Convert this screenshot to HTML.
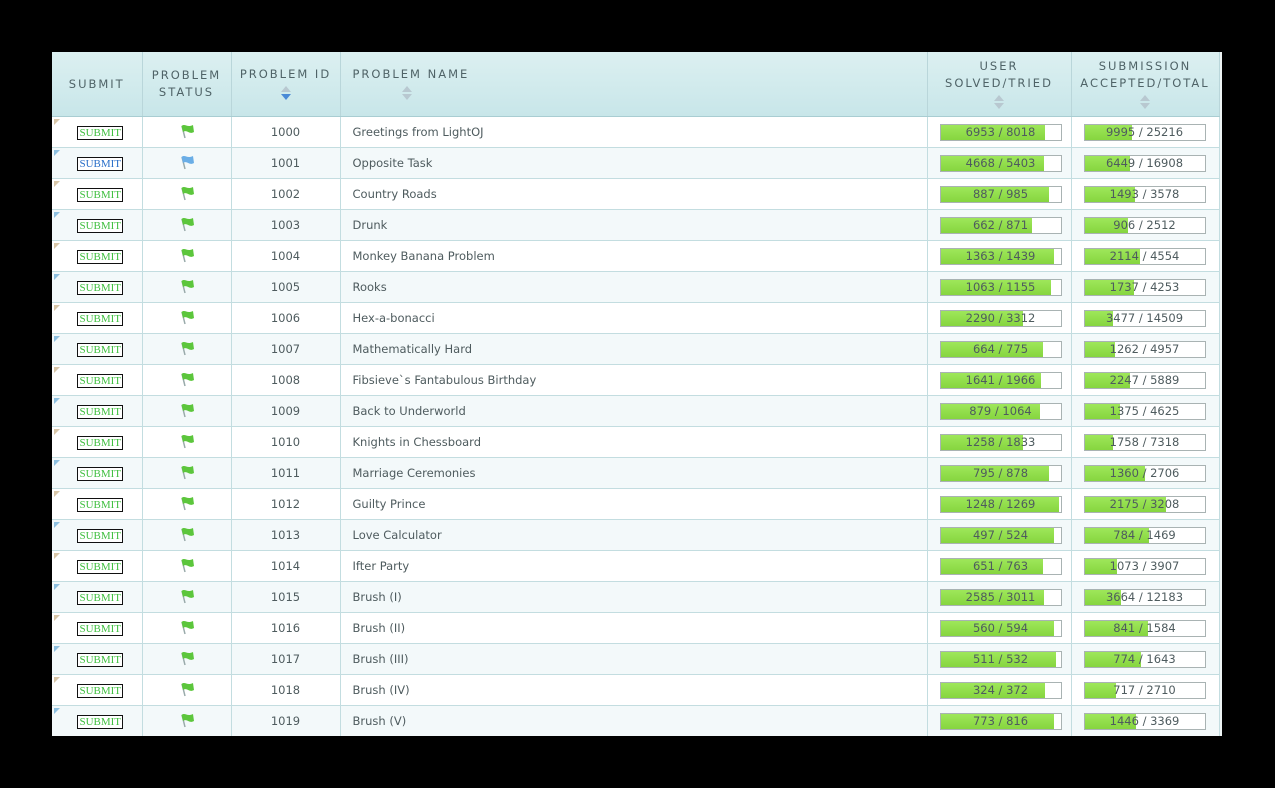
<!DOCTYPE html>
<html><head><meta charset="utf-8"><style>
html,body{margin:0;padding:0;background:#000;width:1275px;height:788px;overflow:hidden}
#wrap{position:absolute;left:52px;top:52px;width:1170px;height:684px;background:#eef4f4;overflow:hidden}
table{border-collapse:collapse;table-layout:fixed;width:1167px;font-family:"DejaVu Sans","Liberation Sans",sans-serif;font-size:11.5px;color:#4e5b5e}
th{height:64px;background:linear-gradient(#dcf0f1,#c8e6e9);font-weight:normal;letter-spacing:2px;font-size:11.5px;color:#4f6367;border-right:1px solid #b9d6da;border-bottom:1px solid #a9cdd2;line-height:17px;vertical-align:middle;padding:0}
td{height:30px;border-right:1px solid #c3dde0;border-bottom:1px solid #c3dde0;padding:0;position:relative}
tr.o td{background:#fff}
tr.e td{background:#f3f9fa}
.c{text-align:center}
.n{padding-left:12px}
.arr{display:block;margin:1px auto 0;width:12px;height:18px}
.btn{display:inline-block;border:1px solid #111;font-family:"Liberation Serif",serif;font-size:11px;color:#3fbf3f;padding:0 1px;line-height:12px;background:#fff;margin-left:7px}
.btn.b{color:#2a6fc9}
.tri{position:absolute;left:2px;top:2px;width:0;height:0;border-top:6px solid #d8c6a8;border-right:6px solid transparent}
.tri.b{border-top-color:#8ec0e0}
.bar{position:relative;margin-left:12px;width:120px;height:15px;border:1px solid #a9b3b3;background:#fff;text-align:center;line-height:15px;font-size:11.5px;color:#4e5b5e}
.bar i{position:absolute;left:0;top:0;bottom:0;background:linear-gradient(#9ee75a,#86d53f)}
.bar span{position:relative}
</style></head><body><div id="wrap">
<table>
<colgroup><col style="width:90px"><col style="width:89px"><col style="width:109px"><col style="width:587px"><col style="width:144px"><col style="width:148px"></colgroup>
<tr><th>SUBMIT</th><th>PROBLEM<br>STATUS</th><th>PROBLEM ID<svg class="arr" viewBox="0 0 12 18"><path d="M6 2L11 8H1z" fill="#b8c8d0"/><path d="M6 16L11 10H1z" fill="#4a8ad6"/></svg></th><th style="text-align:left;padding-left:12px">PROBLEM NAME<svg class="arr" style="margin-left:48px" viewBox="0 0 12 18"><path d="M6 2L11 8H1z" fill="#b8c8d0"/><path d="M6 16L11 10H1z" fill="#b8c8d0"/></svg></th><th>USER<br>SOLVED/TRIED<svg class="arr" viewBox="0 0 12 18"><path d="M6 2L11 8H1z" fill="#b8c8d0"/><path d="M6 16L11 10H1z" fill="#b8c8d0"/></svg></th><th>SUBMISSION<br>ACCEPTED/TOTAL<svg class="arr" viewBox="0 0 12 18"><path d="M6 2L11 8H1z" fill="#b8c8d0"/><path d="M6 16L11 10H1z" fill="#b8c8d0"/></svg></th></tr>
</table>
<script>
var d=[["Greetings from LightOJ",6953,8018,9995,25216],["Opposite Task",4668,5403,6449,16908],["Country Roads",887,985,1493,3578],["Drunk",662,871,906,2512],["Monkey Banana Problem",1363,1439,2114,4554],["Rooks",1063,1155,1737,4253],["Hex-a-bonacci",2290,3312,3477,14509],["Mathematically Hard",664,775,1262,4957],["Fibsieve`s Fantabulous Birthday",1641,1966,2247,5889],["Back to Underworld",879,1064,1375,4625],["Knights in Chessboard",1258,1833,1758,7318],["Marriage Ceremonies",795,878,1360,2706],["Guilty Prince",1248,1269,2175,3208],["Love Calculator",497,524,784,1469],["Ifter Party",651,763,1073,3907],["Brush (I)",2585,3011,3664,12183],["Brush (II)",560,594,841,1584],["Brush (III)",511,532,774,1643],["Brush (IV)",324,372,717,2710],["Brush (V)",773,816,1446,3369]];
var t=document.querySelector('table'),h='';
var flag=function(c){return '<svg width="18" height="18" viewBox="0 0 18 18"><path d="M4 4L7 16" stroke="#9aa" stroke-width="1.5"/><path d="M3.5 4C7 1 9 6 15 3L16 10C11 13 9 7 5 10z" fill="'+c+'"/></svg>';};
d.forEach(function(r,i){var b=i==1;h+='<tr class="'+(i%2?'e':'o')+'"><td class="c"><span class="tri'+(i%2?' b':'')+'"></span><span class="btn'+(b?' b':'')+'">SUBMIT</span></td><td class="c">'+flag(b?'#6aaee6':'#5cc63c')+'</td><td class="c">'+(1000+i)+'</td><td class="n">'+r[0]+'</td><td><div class="bar"><i style="width:'+(r[1]/r[2]*100)+'%"></i><span>'+r[1]+' / '+r[2]+'</span></div></td><td><div class="bar"><i style="width:'+(r[3]/r[4]*100)+'%"></i><span>'+r[3]+' / '+r[4]+'</span></div></td></tr>';});
t.insertAdjacentHTML('beforeend',h);
</script>
</div></body></html>
